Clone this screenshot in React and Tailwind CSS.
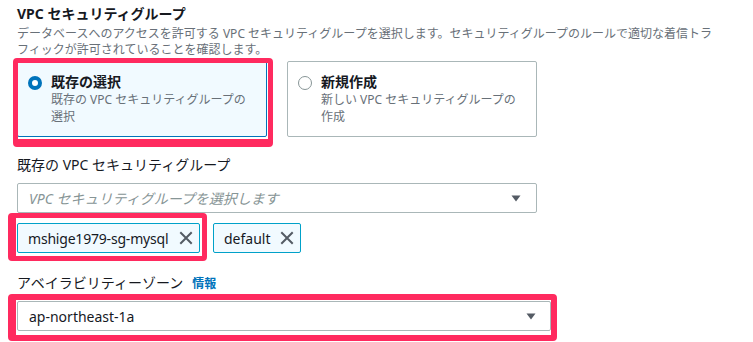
export default function App() {
  const font = { fontFamily: '"Noto Sans", "Noto Sans CJK JP", sans-serif' };

  const Triangle = () => (
    <svg width="10" height="7" viewBox="0 0 10 7">
      <path d="M0.5 0.5h9L5 6.5z" fill="#545b64" />
    </svg>
  );

  const Close = () => (
    <svg width="14" height="14" viewBox="0 0 14 14">
      <path d="M2 2l10 10M12 2L2 12" stroke="#545b64" strokeWidth="2" strokeLinecap="square" />
    </svg>
  );

  return (
    <div className="min-h-screen bg-white pl-[17px] pt-[4px] text-[#16191f]" style={font}>
      <div className="text-[14px] font-bold leading-[20px]">VPC セキュリティグループ</div>
      <div className="mt-[2px] text-[12px] leading-[16px] text-[#687078]">
        データベースへのアクセスを許可する VPC セキュリティグループを選択します。セキュリティグループのルールで適切な着信トラ
        <br />
        フィックが許可されていることを確認します。
      </div>

      <div className="mt-[3px] flex gap-[20px]">
        <div className="relative">
          <div className="flex h-[76px] w-[250px] gap-[9px] rounded-[2px] border border-[#0073bb] bg-[#f1faff] pl-[10px] pt-[11px]">
            <span className="mt-[3px] h-[14px] w-[14px] shrink-0 rounded-full border-[4px] border-[#0073bb] bg-white" />
            <div>
              <div className="text-[14px] font-bold leading-[18px]">既存の選択</div>
              <div className="text-[12px] leading-[17px] text-[#687078]">
                既存の VPC セキュリティグループの
                <br />
                選択
              </div>
            </div>
          </div>
          <div className="pointer-events-none absolute -left-[4px] -top-[3px] -right-[6px] -bottom-[10px] rounded-[4px] border-[5px] border-b-[8px] border-[#ff2a5f]" />
        </div>
        <div className="flex h-[76px] w-[250px] gap-[9px] rounded-[2px] border border-[#aab7b8] bg-white pl-[10px] pt-[11px]">
          <span className="mt-[3px] h-[14px] w-[14px] shrink-0 rounded-full border border-[#879596] bg-white" />
          <div>
            <div className="text-[14px] font-bold leading-[18px]">新規作成</div>
            <div className="text-[12px] leading-[17px] text-[#687078]">
              新しい VPC セキュリティグループの
              <br />
              作成
            </div>
          </div>
        </div>
      </div>

      <div className="mt-[18px] text-[14px] leading-[20px]">既存の VPC セキュリティグループ</div>
      <div className="mt-[8px] flex h-[30px] w-[520px] items-center justify-between rounded-[2px] border border-[#aab7b8] pl-[11px] pr-[15px]">
        <span className="text-[14px] italic text-[#879596]">VPC セキュリティグループを選択します</span>
        <Triangle />
      </div>

      <div className="mt-[10px] flex gap-[13px]">
        <div className="relative">
          <div className="flex h-[30px] w-[183px] items-center justify-between rounded-[2px] border border-[#00a1c9] bg-[#f1faff] pl-[10px] pr-[6px] text-[14px]">
            <span className="tracking-[-0.2px]">mshige1979-sg-mysql</span>
            <Close />
          </div>
          <div className="pointer-events-none absolute -left-[9px] -top-[10px] -right-[7px] -bottom-[8px] rounded-[4px] border-[5px] border-l-[8px] border-[#ff2a5f]" />
        </div>
        <div className="flex h-[30px] w-[88px] items-center justify-between rounded-[2px] border border-[#00a1c9] bg-[#f1faff] pl-[10px] pr-[6px] text-[14px]">
          <span>default</span>
          <Close />
        </div>
      </div>

      <div className="mt-[20px] flex items-baseline gap-[9px] text-[14px] leading-[20px]">
        <span>アベイラビリティーゾーン</span>
        <span className="text-[12px] font-bold text-[#0073bb]">情報</span>
      </div>
      <div className="relative mt-[7px] w-[534px]">
        <div className="flex h-[30px] items-center justify-between rounded-[2px] border border-[#aab7b8] pl-[11px] pr-[14px]">
          <span className="text-[14px]">ap-northeast-1a</span>
          <Triangle />
        </div>
        <div className="pointer-events-none absolute -left-[9px] -top-[7px] -right-[6px] -bottom-[10px] rounded-[4px] border-[6px] border-l-[8px] border-[#ff2a5f]" />
      </div>
    </div>
  );
}
